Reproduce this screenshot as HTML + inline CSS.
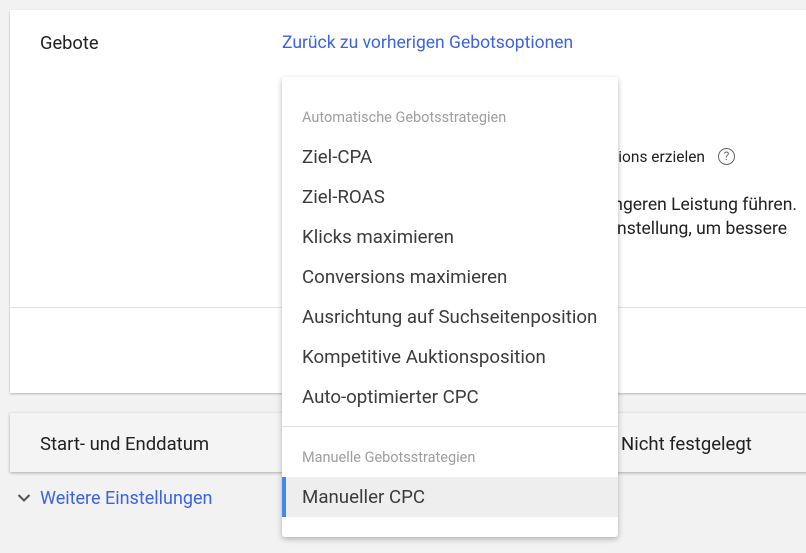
<!DOCTYPE html>
<html><head><style>
*{margin:0;padding:0;box-sizing:border-box}
body{width:806px;height:553px;background:#f2f2f2;font-family:"Roboto","Liberation Sans",sans-serif;position:relative;overflow:hidden;color:#212121}
.card{position:absolute;left:10px;top:10px;width:800px;height:383px;background:#fff;box-shadow:0 1px 2px rgba(0,0,0,.25)}
.t{position:absolute;white-space:nowrap;font-size:18.3px}
.card2{position:absolute;left:10px;top:413px;width:800px;height:59px;background:#f4f4f4;box-shadow:0 1px 3px rgba(0,0,0,.3)}
.menu{position:absolute;left:282px;top:77px;width:336px;height:460px;background:#fff;border-radius:3px;box-shadow:0 2px 6px rgba(0,0,0,.28)}
.mi{position:absolute;left:20px;font-size:18.7px;color:#3c3c3c;white-space:nowrap}
.hd{position:absolute;left:20px;font-size:14.5px;color:#9e9e9e;white-space:nowrap}
.r{position:absolute;white-space:nowrap;font-size:17.5px;text-align:right}
</style></head><body>
<div class="card">
  <div class="t" style="left:30px;top:23px">Gebote</div>
  <div class="t" style="left:272px;top:23px;color:#3d63e0;font-size:17.5px">Zurück zu vorherigen Gebotsoptionen</div>
  <div style="position:absolute;right:105px;top:138px;font-size:15.5px;white-space:nowrap">Conversions erzielen</div>
  <div style="position:absolute;left:708px;top:138px;width:17px;height:17px;border:1.5px solid #666;border-radius:50%;font-size:12px;text-align:center;line-height:14px;color:#666">?</div>
  <div class="r" style="top:185px;right:13px">zu einer geringeren Leistung führen.</div>
  <div class="r" style="top:209px;right:23px">die Einstellung, um bessere</div>
  <div style="position:absolute;left:0;top:297px;width:800px;height:1px;background:#e0e0e0"></div>
</div>
<div class="card2">
  <div class="t" style="left:30px;top:20px;font-size:18.5px">Start- und Enddatum</div>
  <div class="t" style="left:611px;top:20px;font-size:18.5px">Nicht festgelegt</div>
</div>
<svg style="position:absolute;left:17px;top:493px" width="14" height="10"><path d="M1.5 2l5.5 5.5L12.5 2" stroke="#555" stroke-width="2" fill="none"/></svg>
<div class="t" style="left:40px;top:488px;color:#3d63e0;font-size:18px">Weitere Einstellungen</div>
<div class="menu">
  <div class="hd" style="top:32px">Automatische Gebotsstrategien</div>
  <div class="mi" style="top:69px">Ziel-CPA</div>
  <div class="mi" style="top:109px">Ziel-ROAS</div>
  <div class="mi" style="top:149px">Klicks maximieren</div>
  <div class="mi" style="top:189px">Conversions maximieren</div>
  <div class="mi" style="top:229px">Ausrichtung auf Suchseitenposition</div>
  <div class="mi" style="top:269px">Kompetitive Auktionsposition</div>
  <div class="mi" style="top:309px">Auto-optimierter CPC</div>
  <div style="position:absolute;left:0;top:349px;width:336px;height:1px;background:#e0e0e0"></div>
  <div class="hd" style="top:372px">Manuelle Gebotsstrategien</div>
  <div style="position:absolute;left:0;top:400px;width:336px;height:40px;background:#eeeeee;border-left:4px solid #4285f4"></div>
  <div class="mi" style="top:409px">Manueller CPC</div>
</div>
</body></html>
